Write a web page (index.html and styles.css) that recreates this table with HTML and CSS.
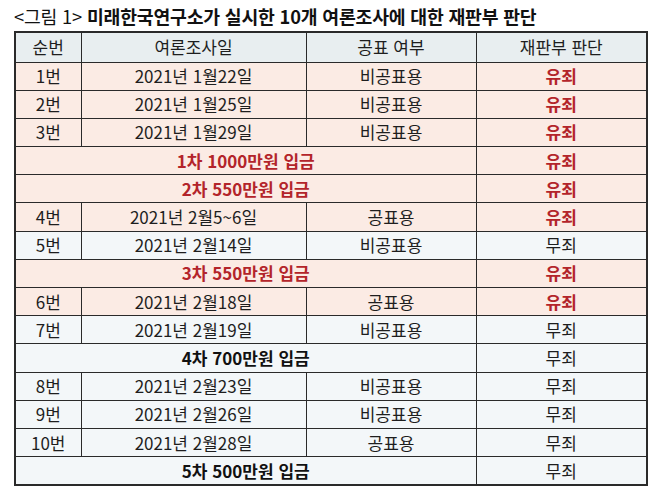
FILE: index.html
```html
<!DOCTYPE html>
<html lang="ko">
<head>
<meta charset="utf-8">
<link rel="stylesheet" href="styles.css">
</head>
<body>
<div class="page">
  <h1 class="title"><span class="title-pre">&lt;그림 1&gt;</span> 미래한국연구소가 실시한 10개 여론조사에 대한 재판부 판단</h1>
  <table class="grid">
    <colgroup>
      <col class="c1"><col class="c2"><col class="c3"><col class="c4">
    </colgroup>
    <thead>
      <tr class="head"><th>순번</th><th>여론조사일</th><th>공표 여부</th><th>재판부 판단</th></tr>
    </thead>
    <tbody>
      <tr class="pink"><td>1번</td><td>2021년 1월22일</td><td>비공표용</td><td class="red">유죄</td></tr>
      <tr class="pink"><td>2번</td><td>2021년 1월25일</td><td>비공표용</td><td class="red">유죄</td></tr>
      <tr class="pink"><td>3번</td><td>2021년 1월29일</td><td>비공표용</td><td class="red">유죄</td></tr>
      <tr class="pink"><td colspan="3" class="red">1차 1000만원 입금</td><td class="red">유죄</td></tr>
      <tr class="pink"><td colspan="3" class="red">2차 550만원 입금</td><td class="red">유죄</td></tr>
      <tr class="pink"><td>4번</td><td>2021년 2월5~6일</td><td>공표용</td><td class="red">유죄</td></tr>
      <tr class="blue"><td>5번</td><td>2021년 2월14일</td><td>비공표용</td><td>무죄</td></tr>
      <tr class="pink"><td colspan="3" class="red">3차 550만원 입금</td><td class="red">유죄</td></tr>
      <tr class="pink"><td>6번</td><td>2021년 2월18일</td><td>공표용</td><td class="red">유죄</td></tr>
      <tr class="blue"><td>7번</td><td>2021년 2월19일</td><td>비공표용</td><td>무죄</td></tr>
      <tr class="blue"><td colspan="3" class="strong">4차 700만원 입금</td><td>무죄</td></tr>
      <tr class="blue"><td>8번</td><td>2021년 2월23일</td><td>비공표용</td><td>무죄</td></tr>
      <tr class="blue"><td>9번</td><td>2021년 2월26일</td><td>비공표용</td><td>무죄</td></tr>
      <tr class="blue"><td>10번</td><td>2021년 2월28일</td><td>공표용</td><td>무죄</td></tr>
      <tr class="blue"><td colspan="3" class="strong">5차 500만원 입금</td><td>무죄</td></tr>
    </tbody>
  </table>
</div>
</body>
</html>
```

FILE: styles.css
```css
html, body {
  margin: 0;
  padding: 0;
  background: #ffffff;
}
.page {
  padding: 4px 12px 0 14px;
  font-family: "Noto Sans CJK KR", "Noto Sans", sans-serif;
  color: #222;
}
.title {
  margin: 0 0 3px 0;
  font-size: 18.3px;
  line-height: 24px;
  font-weight: 700;
  color: #111;
  letter-spacing: -0.2px;
  white-space: nowrap;
}
.title-pre {
  font-weight: 400;
}
.grid {
  border-collapse: collapse;
  width: 632px;
  table-layout: fixed;
  border: 2px solid #2a2a2a;
  font-size: 17px;
}
.c1 { width: 66px; }
.c2 { width: 225px; }
.c3 { width: 170px; }
.c4 { width: 171px; }
.grid th, .grid td {
  border: 1.5px solid #2a2a2a;
  text-align: center;
  padding: 0;
  height: 27.2px;
  line-height: 20px;
  font-weight: 400;
  color: #1e1e1e;
}
.head th {
  height: 28.5px;
  background: #e8eef0;
}
.pink td { background: #fbebe4; }
.blue td { background: #f3f7f9; }
.grid td.red {
  color: #b3242a;
  font-weight: 700;
}
.grid td.strong {
  color: #111;
  font-weight: 700;
}
```
